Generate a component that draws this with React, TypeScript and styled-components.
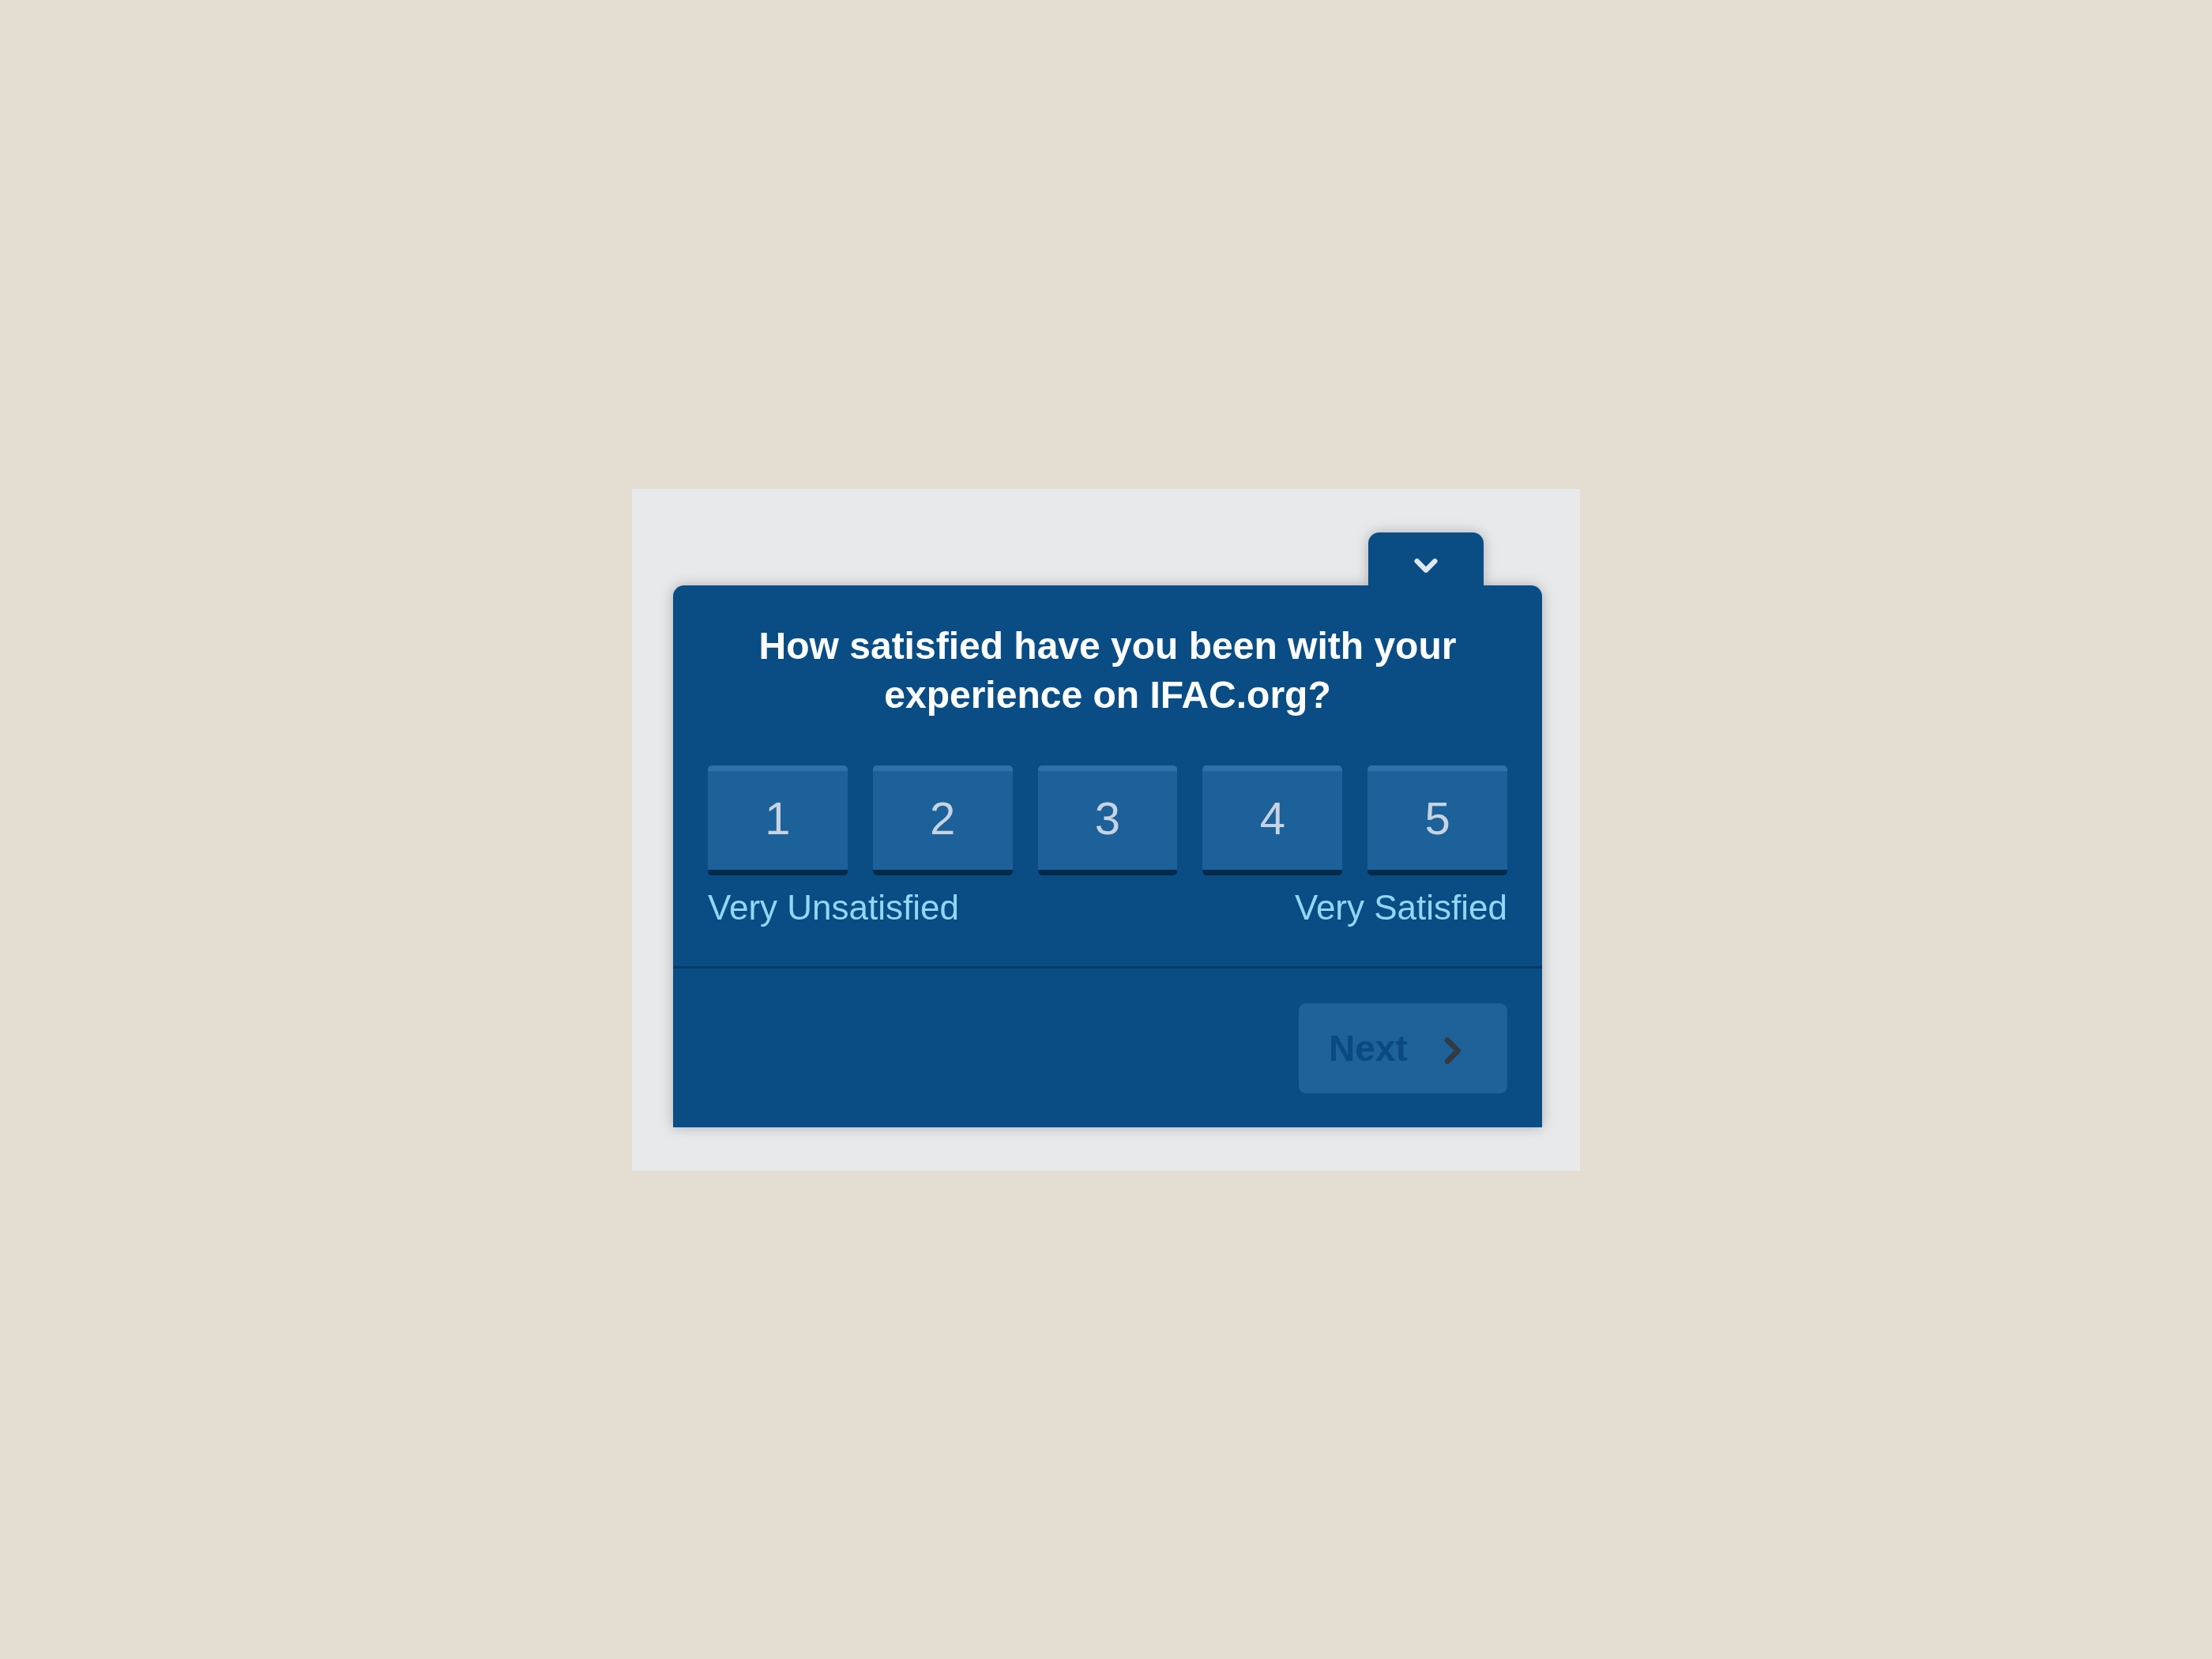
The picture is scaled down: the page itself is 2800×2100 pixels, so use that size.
import React, { FC } from 'react';
import styled, { createGlobalStyle } from 'styled-components';

const GlobalStyle = createGlobalStyle`
  html, body {
    margin: 0;
    padding: 0;
    background: #e4ddd2;
    font-family: "Liberation Sans", Arial, sans-serif;
  }
`

const Page = styled.div`
  min-height: 100vh;
  display: flex;
  align-items: center;
  justify-content: center;
`

const Frame = styled.div`
  width: 1200px;
  box-sizing: border-box;
  padding: 55px 48px 55px 52px;
  background: #e8e9eb;
`

const Widget = styled.div`
  display: flex;
  flex-direction: column;
  filter: drop-shadow(0 0 8px rgba(0, 0, 0, 0.25));
`

const TabRow = styled.div`
  display: flex;
  justify-content: flex-end;
  padding-right: 74px;
`

const Tab = styled.button`
  width: 146px;
  height: 67px;
  border: none;
  border-radius: 14px 14px 0 0;
  background: #0a4d85;
  display: flex;
  align-items: center;
  justify-content: center;
  padding: 18px 0 0;
  cursor: pointer;
`

const Card = styled.div`
  background: #0a4d85;
  border-radius: 14px 14px 0 0;
`

const Body = styled.div`
  padding: 46px 44px 48px;
`

const Title = styled.h2`
  margin: 0;
  color: #ffffff;
  font-size: 48px;
  font-weight: 700;
  line-height: 62px;
  text-align: center;
`

const Scale = styled.div`
  display: flex;
  gap: 32px;
  margin-top: 58px;
`

const ScaleButton = styled.button`
  flex: 1;
  height: 139px;
  box-sizing: border-box;
  border: none;
  border-radius: 5px;
  border-top: 7px solid #2c71aa;
  border-bottom: 7px solid #042a4a;
  background: #1c6199;
  color: #c6d3e2;
  font-family: "Liberation Sans", Arial, sans-serif;
  font-size: 58px;
  padding: 0 0 6px;
  cursor: pointer;
`

const Labels = styled.div`
  display: flex;
  justify-content: space-between;
  margin-top: 15px;
  color: #8fd8f6;
  font-size: 44px;
  line-height: 52px;
`

const Footer = styled.div`
  border-top: 3px solid #063a66;
  padding: 44px 44px 43px;
  display: flex;
  justify-content: flex-end;
`

const NextButton = styled.button`
  width: 264px;
  height: 114px;
  border: none;
  border-radius: 9px;
  background: #1e6299;
  color: #0b4a80;
  font-family: "Liberation Sans", Arial, sans-serif;
  font-size: 46px;
  font-weight: 700;
  display: flex;
  align-items: center;
  padding: 0 0 0 38px;
  gap: 38px;
  cursor: not-allowed;

  svg {
    margin-top: 6px;
  }
`

const Chevron: FC<{ dir: 'down' | 'right'; color: string; size: number; stroke: number }> = ({ dir, color, size, stroke }) => (
  <svg width={size} height={size} viewBox="0 0 24 24" fill="none">
    <polyline
      points={dir === 'down' ? '4,8 12,16 20,8' : '8,3 17,12 8,21'}
      stroke={color}
      strokeWidth={stroke}
      strokeLinecap="round"
      strokeLinejoin="round"
    />
  </svg>
)

export default function App() {
  return (
    <Page>
      <GlobalStyle />
      <Frame>
        <Widget>
          <TabRow>
            <Tab aria-label="Collapse">
              <Chevron dir="down" color="#dfe8f1" size={34} stroke={4.5} />
            </Tab>
          </TabRow>
          <Card>
            <Body>
              <Title>
                How satisfied have you been with your
                <br />
                experience on IFAC.org?
              </Title>
              <Scale>
                {[1, 2, 3, 4, 5].map((n) => (
                  <ScaleButton key={n}>{n}</ScaleButton>
                ))}
              </Scale>
              <Labels>
                <span>Very Unsatisfied</span>
                <span>Very Satisfied</span>
              </Labels>
            </Body>
            <Footer>
              <NextButton disabled>
                Next
                <Chevron dir="right" color="#343a42" size={36} stroke={4.5} />
              </NextButton>
            </Footer>
          </Card>
        </Widget>
      </Frame>
    </Page>
  );
}
